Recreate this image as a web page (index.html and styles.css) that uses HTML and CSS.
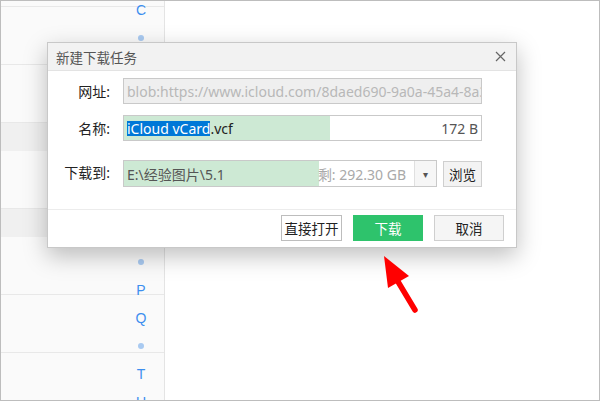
FILE: index.html
```html
<!DOCTYPE html>
<html lang="zh-CN">

<head>
    <meta charset="UTF-8">
    <meta name="viewport" content="width=device-width, initial-scale=1.0">
    <title>新建下载任务</title>
    <link rel="stylesheet" href="styles.css">
</head>

<body>
    <div class="screen">
        <aside class="contacts">
            <ul class="contact-list">
                <li class="row row-top"></li>
                <li class="row"></li>
                <li class="row"></li>
                <li class="group"></li>
                <li class="row"></li>
                <li class="group"></li>
                <li class="row"></li>
                <li class="row"></li>
                <li class="row"></li>
            </ul>
            <nav class="letter-index">
                <span>C</span>
                <span class="dot"></span>
                <span class="gap"></span>
                <span class="gap"></span>
                <span class="gap"></span>
                <span class="gap"></span>
                <span class="gap"></span>
                <span class="gap"></span>
                <span class="gap"></span>
                <span class="dot"></span>
                <span>P</span>
                <span>Q</span>
                <span class="dot"></span>
                <span>T</span>
                <span>U</span>
            </nav>
        </aside>
        <main class="detail"></main>

        <div class="dialog">
            <div class="dialog-title">
                <span>新建下载任务</span>
                <svg class="close" width="11" height="11" viewBox="0 0 11 11">
                    <path d="M1 1L10 10M10 1L1 10" stroke="#666" stroke-width="1.2" fill="none" />
                </svg>
            </div>
            <div class="dialog-body">
                <div class="field">
                    <label class="field-label">网址:</label>
                    <div class="text-box readonly">blob:https://www.icloud.com/8daed690-9a0a-45a4-8a3c</div>
                </div>
                <div class="field field-name">
                    <label class="field-label">名称:</label>
                    <div class="text-box name-box">
                        <span class="selected">iCloud vCard</span>.vcf
                        <span class="size">172 B</span>
                    </div>
                </div>
                <div class="field field-path">
                    <label class="field-label">下载到:</label>
                    <div class="text-box path-box">
                        <span class="path">E:\经验图片\5.1</span>
                        <span class="free">剩: 292.30 GB</span>
                        <span class="dropdown">▾</span>
                    </div>
                    <button class="btn btn-browse">浏览</button>
                </div>
            </div>
            <div class="dialog-footer">
                <button class="btn btn-open">直接打开</button>
                <button class="btn btn-download">下载</button>
                <button class="btn btn-cancel">取消</button>
            </div>
        </div>

        <svg class="arrow" width="60" height="75" viewBox="0 0 60 75">
            <polygon points="13,10 38,30 17,42" fill="#f00" />
            <line x1="26" y1="34" x2="44" y2="64" stroke="#f00" stroke-width="5.5" stroke-linecap="round" />
        </svg>
    </div>
</body>

</html>
```

FILE: styles.css
```css
body {
    margin: 0;
    font-family: "Noto Sans", "Noto Sans CJK SC", sans-serif;
}

.screen {
    position: relative;
    width: 600px;
    height: 401px;
    box-sizing: border-box;
    border: 1px solid #bdbdbd;
    display: flex;
    overflow: hidden;
    background: #fff;
}

/* contacts pane */
.contacts {
    position: relative;
    width: 163px;
    flex-shrink: 0;
    background: #fafafa;
    border-right: 1px solid #e4e4e4;
}

.contact-list {
    list-style: none;
    margin: 0;
    padding: 0;
}

.row {
    height: 57px;
    border-bottom: 1px solid #e8e8e8;
}

.row-top {
    height: 5px;
}

.group {
    height: 28px;
    background: #f0f0f0;
}

.letter-index {
    position: absolute;
    top: -5px;
    left: 128px;
    width: 24px;
    display: flex;
    flex-direction: column;
    align-items: center;
    font-family: "Liberation Sans", Arial, sans-serif;
    font-size: 14px;
    color: #3d8eef;
}

.letter-index span {
    height: 28px;
    line-height: 28px;
}

.letter-index .dot {
    display: flex;
    align-items: center;
}

.letter-index .dot::before {
    content: "";
    width: 6px;
    height: 6px;
    border-radius: 50%;
    background: #a9caf1;
}

.detail {
    flex: 1;
}

/* dialog */
.dialog {
    position: absolute;
    left: 46px;
    top: 41px;
    width: 470px;
    height: 206px;
    box-sizing: border-box;
    background: #fff;
    border: 1px solid #c8c8c8;
    box-shadow: 0 8px 22px rgba(0, 0, 0, 0.25);
    display: flex;
    flex-direction: column;
    font-size: 14px;
    color: #333;
}

.dialog-title {
    height: 27px;
    background: #f2f2f2;
    border-bottom: 1px solid #e3e3e3;
    display: flex;
    align-items: center;
    justify-content: space-between;
    padding: 0 10px 0 8px;
    font-size: 13.5px;
    color: #555;
}

.dialog-body {
    flex: 1;
    padding: 7px 34px 0 0;
}

.field {
    display: flex;
    align-items: center;
    height: 26px;
}

.field-name {
    margin-top: 11px;
}

.field-path {
    margin-top: 19px;
    height: 27px;
}

.field-label {
    width: 62px;
    margin-right: 13px;
    text-align: right;
    color: #222;
}

.field-path .field-label {
    margin-top: -4px;
}

.text-box {
    flex: 1;
    height: 100%;
    box-sizing: border-box;
    border: 1px solid #c9c9c9;
    display: flex;
    align-items: center;
    padding: 0 3px;
    white-space: nowrap;
    overflow: hidden;
}

.readonly {
    background: #efefef;
    color: #b8b8b8;
}

.name-box {
    background: linear-gradient(to right, #cde9d4 206px, #fff 206px);
    color: #222;
}

.selected {
    background: #0078d7;
    color: #fff;
    line-height: 15px;
}

.size {
    margin-left: auto;
    color: #555;
}

.path-box {
    flex: 0 0 314px;
    padding-right: 0;
    background: linear-gradient(to right, #cde9d4 195px, #fff 195px);
}

.path {
    color: #555;
}

.free {
    margin-left: auto;
    margin-right: 8px;
    color: #a9a9a9;
}

.dropdown {
    width: 21px;
    height: 100%;
    border-left: 1px solid #e0e0e0;
    background: #f6f6f6;
    display: flex;
    align-items: center;
    justify-content: center;
    font-size: 10px;
    color: #555;
}

.btn {
    font-family: inherit;
    font-size: 13.5px;
    box-sizing: border-box;
    height: 26px;
    padding: 0;
    border: 1px solid #cfcfcf;
    background: #f3f3f3;
    color: #222;
    cursor: pointer;
}

.btn-browse {
    width: 39px;
    margin-left: 6px;
}

.dialog-footer {
    border-top: 1px solid #ececec;
    padding: 5px 12px 0 0;
    height: 38px;
    box-sizing: border-box;
    display: flex;
    justify-content: flex-end;
    gap: 11px;
}

.btn-open {
    width: 61px;
    background: #fff;
    border-color: #bdbdbd;
}

.btn-download {
    width: 70px;
    background: #2ec36c;
    border-color: #2ec36c;
    color: #fff;
}

.btn-cancel {
    width: 70px;
    background: #f5f5f5;
}

.arrow {
    position: absolute;
    left: 370px;
    top: 245px;
}
```
